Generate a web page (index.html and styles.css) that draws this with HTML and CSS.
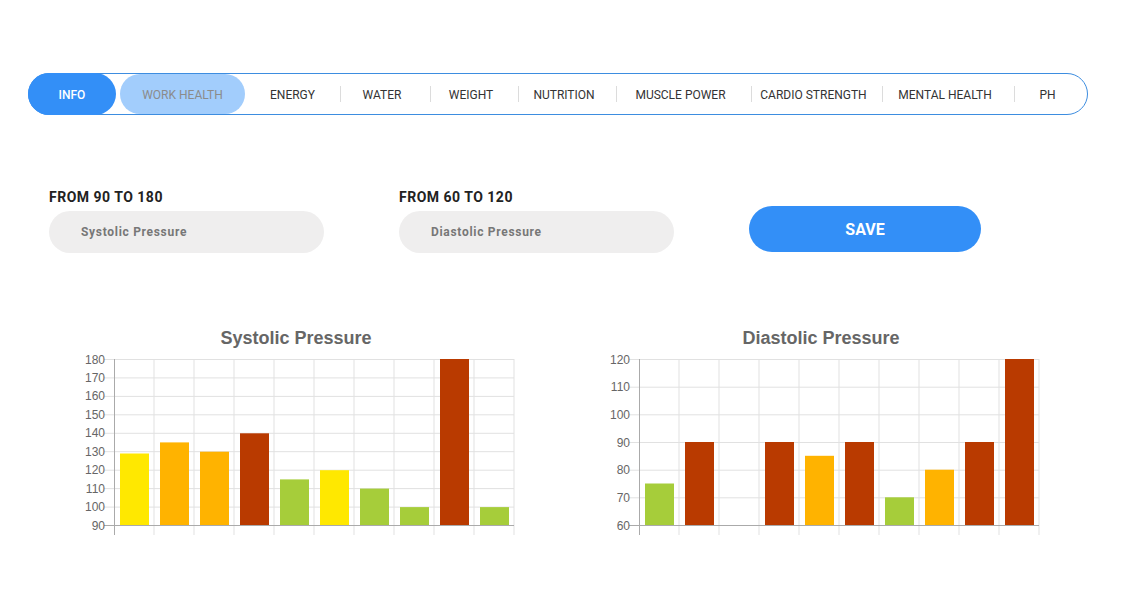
FILE: index.html
```html
<!DOCTYPE html>
<html lang="en">
<head>
<meta charset="utf-8">
<title>Health tracker – Blood pressure</title>
<link rel="stylesheet" href="styles.css">
</head>
<body>
<main class="page">
  <nav class="tabs">
    <a class="tab tab-active">INFO</a>
    <a class="tab tab-soft"><span>WORK HEALTH</span></a>
    <a class="tab">ENERGY</a>
    <a class="tab tab-sep">WATER</a>
    <a class="tab tab-sep">WEIGHT</a>
    <a class="tab tab-sep">NUTRITION</a>
    <a class="tab tab-sep">MUSCLE POWER</a>
    <a class="tab tab-sep">CARDIO STRENGTH</a>
    <a class="tab tab-sep">MENTAL HEALTH</a>
    <a class="tab tab-sep">PH</a>
  </nav>

  <form class="pressure-form">
    <label class="field">
      <span class="field-label">FROM 90 TO 180</span>
      <input class="field-input" type="text" placeholder="Systolic Pressure">
    </label>
    <label class="field">
      <span class="field-label">FROM 60 TO 120</span>
      <input class="field-input" type="text" placeholder="Diastolic Pressure">
    </label>
    <button class="save-btn" type="button">SAVE</button>
  </form>

  <section class="charts">
    <figure class="chart">
      <h3 class="chart-title">Systolic Pressure</h3>
      <svg class="chart-svg" width="442" height="190" viewBox="0 0 442 190">
        <g class="grid">
          <line x1="79" y1="9" x2="79" y2="185"/>
          <line x1="119" y1="9" x2="119" y2="185"/>
          <line x1="159" y1="9" x2="159" y2="185"/>
          <line x1="199" y1="9" x2="199" y2="185"/>
          <line x1="239" y1="9" x2="239" y2="185"/>
          <line x1="279" y1="9" x2="279" y2="185"/>
          <line x1="319" y1="9" x2="319" y2="185"/>
          <line x1="359" y1="9" x2="359" y2="185"/>
          <line x1="399" y1="9" x2="399" y2="185"/>
          <line x1="439" y1="9" x2="439" y2="185"/>
          <line x1="29" y1="9.5" x2="439" y2="9.5"/>
          <line x1="29" y1="27.9" x2="439" y2="27.9"/>
          <line x1="29" y1="46.4" x2="439" y2="46.4"/>
          <line x1="29" y1="64.8" x2="439" y2="64.8"/>
          <line x1="29" y1="83.3" x2="439" y2="83.3"/>
          <line x1="29" y1="101.7" x2="439" y2="101.7"/>
          <line x1="29" y1="120.2" x2="439" y2="120.2"/>
          <line x1="29" y1="138.6" x2="439" y2="138.6"/>
          <line x1="29" y1="157.1" x2="439" y2="157.1"/>
        </g>
        <g class="axis">
          <line x1="39.5" y1="9" x2="39.5" y2="185"/>
          <line x1="29" y1="175.5" x2="439" y2="175.5"/>
        </g>
        <g class="ticks">
          <text x="30" y="13.5">180</text>
          <text x="30" y="31.9">170</text>
          <text x="30" y="50.4">160</text>
          <text x="30" y="68.8">150</text>
          <text x="30" y="87.3">140</text>
          <text x="30" y="105.7">130</text>
          <text x="30" y="124.2">120</text>
          <text x="30" y="142.6">110</text>
          <text x="30" y="161.1">100</text>
          <text x="30" y="179.5">90</text>
        </g>
        <g class="bars">
          <rect class="c-yellow" x="45" y="103.5" width="29" height="71.5"/>
          <rect class="c-orange" x="85" y="92.4" width="29" height="82.6"/>
          <rect class="c-orange" x="125" y="101.7" width="29" height="73.3"/>
          <rect class="c-red" x="165" y="83.3" width="29" height="91.7"/>
          <rect class="c-green" x="205" y="129.4" width="29" height="45.6"/>
          <rect class="c-yellow" x="245" y="120.2" width="29" height="54.8"/>
          <rect class="c-green" x="285" y="138.6" width="29" height="36.4"/>
          <rect class="c-green" x="325" y="157.1" width="29" height="17.9"/>
          <rect class="c-red" x="365" y="9" width="29" height="166"/>
          <rect class="c-green" x="405" y="157.1" width="29" height="17.9"/>
        </g>
      </svg>
    </figure>

    <figure class="chart">
      <h3 class="chart-title">Diastolic Pressure</h3>
      <svg class="chart-svg" width="442" height="190" viewBox="0 0 442 190">
        <g class="grid">
          <line x1="79" y1="9" x2="79" y2="185"/>
          <line x1="119" y1="9" x2="119" y2="185"/>
          <line x1="159" y1="9" x2="159" y2="185"/>
          <line x1="199" y1="9" x2="199" y2="185"/>
          <line x1="239" y1="9" x2="239" y2="185"/>
          <line x1="279" y1="9" x2="279" y2="185"/>
          <line x1="319" y1="9" x2="319" y2="185"/>
          <line x1="359" y1="9" x2="359" y2="185"/>
          <line x1="399" y1="9" x2="399" y2="185"/>
          <line x1="439" y1="9" x2="439" y2="185"/>
          <line x1="29" y1="9.5" x2="439" y2="9.5"/>
          <line x1="29" y1="37.2" x2="439" y2="37.2"/>
          <line x1="29" y1="64.8" x2="439" y2="64.8"/>
          <line x1="29" y1="92.5" x2="439" y2="92.5"/>
          <line x1="29" y1="120.2" x2="439" y2="120.2"/>
          <line x1="29" y1="147.8" x2="439" y2="147.8"/>
        </g>
        <g class="axis">
          <line x1="39.5" y1="9" x2="39.5" y2="185"/>
          <line x1="29" y1="175.5" x2="439" y2="175.5"/>
        </g>
        <g class="ticks">
          <text x="30" y="13.5">120</text>
          <text x="30" y="41.2">110</text>
          <text x="30" y="68.8">100</text>
          <text x="30" y="96.5">90</text>
          <text x="30" y="124.2">80</text>
          <text x="30" y="151.8">70</text>
          <text x="30" y="179.5">60</text>
        </g>
        <g class="bars">
          <rect class="c-green" x="45" y="133.5" width="29" height="41.5"/>
          <rect class="c-red" x="85" y="92.0" width="29" height="83"/>
          <rect class="c-red" x="165" y="92.0" width="29" height="83"/>
          <rect class="c-orange" x="205" y="105.8" width="29" height="69.2"/>
          <rect class="c-red" x="245" y="92.0" width="29" height="83"/>
          <rect class="c-green" x="285" y="147.3" width="29" height="27.7"/>
          <rect class="c-orange" x="325" y="119.7" width="29" height="55.3"/>
          <rect class="c-red" x="365" y="92.0" width="29" height="83"/>
          <rect class="c-red" x="405" y="9" width="29" height="166"/>
        </g>
      </svg>
    </figure>
  </section>
</main>
</body>
</html>
```

FILE: styles.css
```css
* {
  box-sizing: border-box;
}

html,
body {
  margin: 0;
  background: #ffffff;
}

body {
  font-family: Roboto, "Liberation Sans", Arial, sans-serif;
  color: #222;
}

.page {
  padding: 73px 35px 0 28px;
}

/* ---------- tab strip ---------- */

.tabs {
  display: grid;
  grid-template-columns: 87px 129px 95px 90px 88px 98px 135px 131px 132px 1fr;
  height: 42px;
  border: 1px solid #3d8de0;
  border-radius: 21px;
  align-items: stretch;
}

.tab {
  position: relative;
  display: flex;
  align-items: center;
  justify-content: center;
  padding-top: 2px;
  font-size: 12px;
  font-weight: 400;
  color: #333;
  white-space: nowrap;
  cursor: pointer;
}

.tab-active {
  margin: -1px 0 -1px -1px;
  background: #338ff7;
  color: #fff;
  font-weight: 500;
  border-radius: 21px;
}

.tab-soft {
  padding-top: 0;
  padding-left: 4px;
}

.tab-soft span {
  display: flex;
  align-items: center;
  justify-content: center;
  width: 100%;
  height: 100%;
  padding-top: 2px;
  background: #a2cdfc;
  color: #8b8b8b;
  border-radius: 20px;
}

.tab-sep {
  padding-right: 6px;
}

.tab-sep::before {
  content: "";
  position: absolute;
  left: 0;
  top: 12px;
  height: 16px;
  border-left: 1px solid #dcdcdc;
}

/* ---------- form ---------- */

.pressure-form {
  display: flex;
  align-items: flex-end;
  gap: 75px;
  margin-top: 74px;
  padding-left: 21px;
}

.field {
  display: flex;
  flex-direction: column;
  width: 275px;
}

.field-label {
  font-size: 14px;
  font-weight: 700;
  line-height: 17px;
  letter-spacing: 0.5px;
  color: #222;
  margin-bottom: 5px;
}

.field-input {
  height: 42px;
  border: none;
  border-radius: 21px;
  background: #efeeee;
  padding: 0 0 0 32px;
  font-family: Roboto, "Liberation Sans", Arial, sans-serif;
  font-size: 12px;
  font-weight: 700;
  letter-spacing: 0.7px;
  color: #555;
  outline: none;
}

.field-input::placeholder {
  color: #777;
}

.save-btn {
  width: 232px;
  height: 46px;
  margin-bottom: 1px;
  border: none;
  border-radius: 23px;
  background: #338ff7;
  color: #fff;
  font-family: Roboto, "Liberation Sans", Arial, sans-serif;
  font-size: 16px;
  font-weight: 700;
  cursor: pointer;
}

/* ---------- charts ---------- */

.charts {
  display: flex;
  gap: 83px;
  margin-top: 74px;
  padding-left: 47px;
}

.chart {
  margin: 0;
  width: 442px;
}

.chart-title {
  margin: 0 0 1px;
  height: 22px;
  line-height: 22px;
  text-align: center;
  font-family: "Liberation Sans", Arial, Helvetica, sans-serif;
  font-size: 18px;
  font-weight: 700;
  color: #666;
}

.chart-svg {
  display: block;
}

.grid line {
  stroke: #e1e1e1;
  stroke-width: 1;
}

.axis line {
  stroke: #aaaaaa;
  stroke-width: 1;
}

.ticks text {
  font-family: "Liberation Sans", Arial, Helvetica, sans-serif;
  font-size: 12px;
  fill: #666;
  text-anchor: end;
}

.c-yellow { fill: #ffe800; }
.c-orange { fill: #ffb300; }
.c-red    { fill: #b93a00; }
.c-green  { fill: #a6cd3a; }
```
